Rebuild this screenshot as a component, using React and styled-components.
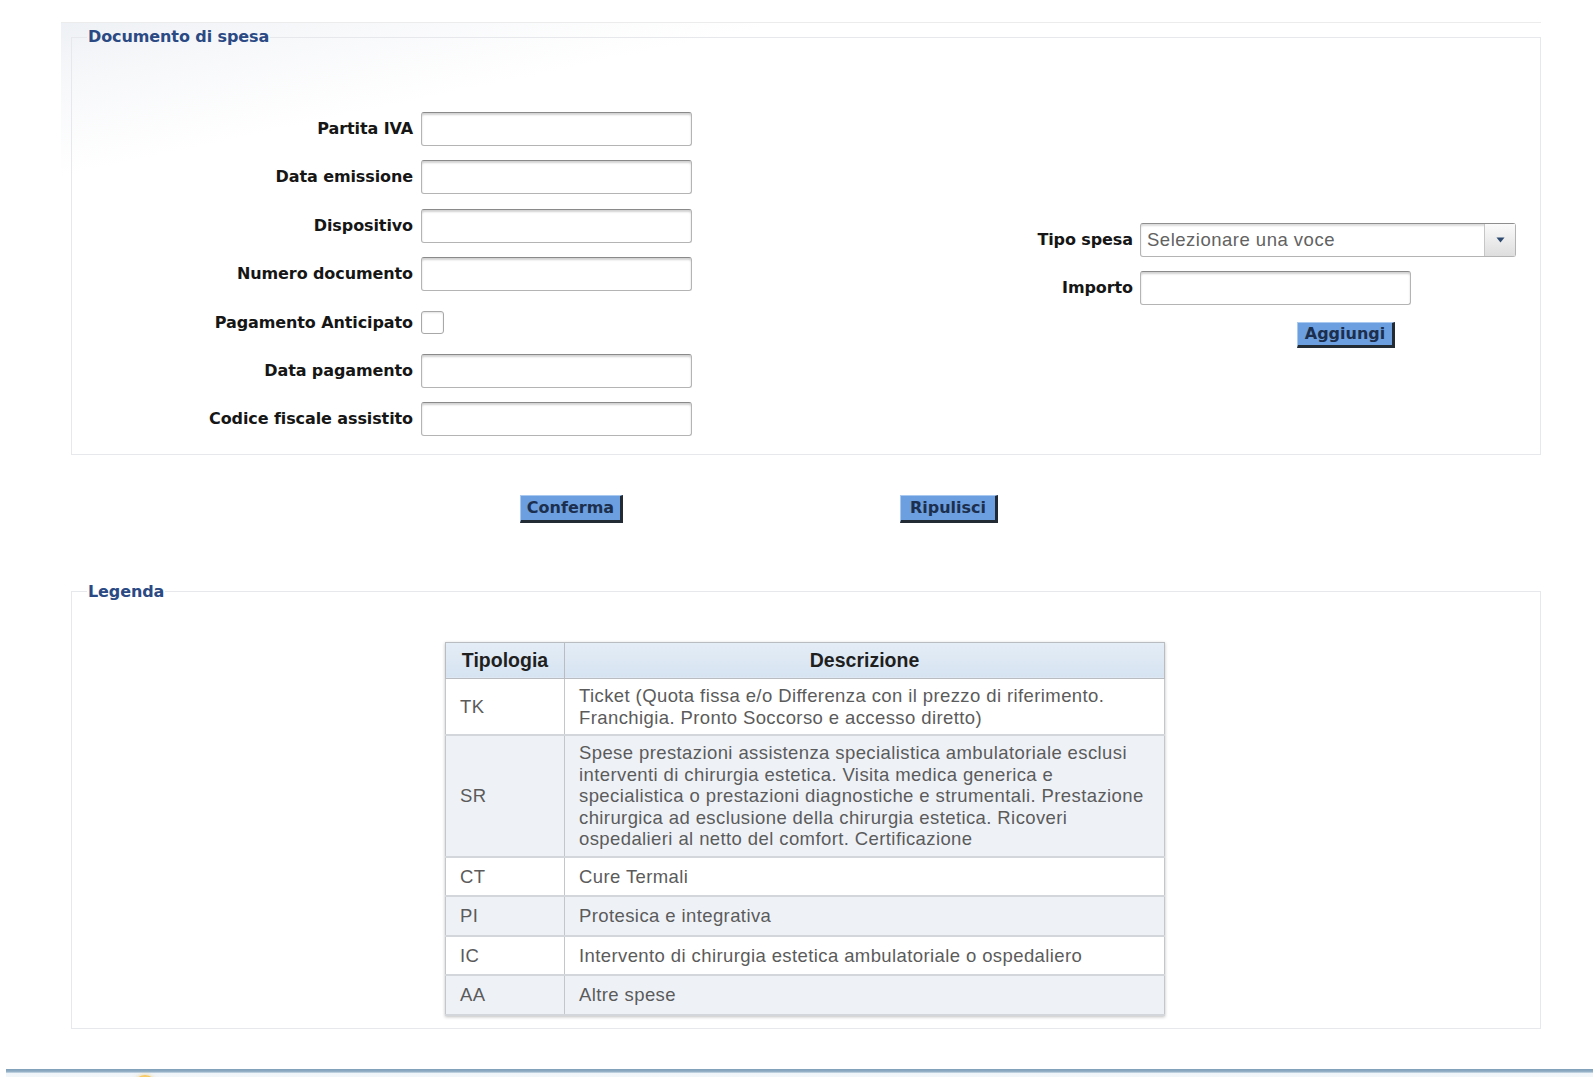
import styled, { createGlobalStyle } from "styled-components";

const GlobalStyle = createGlobalStyle`
  html, body {
    margin: 0;
    padding: 0;
    background: #ffffff;
  }
  body {
    font-family: "DejaVu Sans", Verdana, sans-serif;
    overflow: hidden;
  }
`;

const documentFields = [
  { label: "Partita IVA", type: "text" },
  { label: "Data emissione", type: "text" },
  { label: "Dispositivo", type: "text" },
  { label: "Numero documento", type: "text" },
  { label: "Pagamento Anticipato", type: "check" },
  { label: "Data pagamento", type: "text" },
  { label: "Codice fiscale assistito", type: "text" },
];

const legendRows = [
  {
    code: "TK",
    pad: 6,
    lines: [
      "Ticket (Quota fissa e/o Differenza con il prezzo di riferimento.",
      "Franchigia. Pronto Soccorso e accesso diretto)",
    ],
  },
  {
    code: "SR",
    pad: 6,
    lines: [
      "Spese prestazioni assistenza specialistica ambulatoriale esclusi",
      "interventi di chirurgia estetica. Visita medica generica e",
      "specialistica o prestazioni diagnostiche e strumentali. Prestazione",
      "chirurgica ad esclusione della chirurgia estetica. Ricoveri",
      "ospedalieri al netto del comfort. Certificazione",
    ],
  },
  { code: "CT", pad: 8, lines: ["Cure Termali"] },
  { code: "PI", pad: 8, lines: ["Protesica e integrativa"] },
  { code: "IC", pad: 8, lines: ["Intervento di chirurgia estetica ambulatoriale o ospedaliero"] },
  { code: "AA", pad: 8, lines: ["Altre spese"] },
];

export default function App() {
  return (
    <>
      <GlobalStyle />
      <Page>
        <TopBand>
          <Fieldset>
            <Legend>Documento di spesa</Legend>
            <FormBody>
              <FieldGrid $labelWidth={341} $gap={8} $rowGap={14.4}>
                {documentFields.map((f) => (
                  <Row key={f.label}>
                    <Label>{f.label}</Label>
                    {f.type === "check" ? (
                      <CheckWrap>
                        <CheckBox />
                      </CheckWrap>
                    ) : (
                      <TextInput $width={271} />
                    )}
                  </Row>
                ))}
              </FieldGrid>

              <RightBlock>
                <FieldGrid $gap={7} $rowGap={13.7}>
                  <Row>
                    <Label>Tipo spesa</Label>
                    <Select>
                      <SelectText>Selezionare una voce</SelectText>
                      <SelectArrow>
                        <svg width="9" height="6" viewBox="0 0 9 6">
                          <path d="M0.5 0.5 L8.5 0.5 L4.5 5.5 Z" fill="#2e4a70" />
                        </svg>
                      </SelectArrow>
                    </Select>
                  </Row>
                  <Row>
                    <Label>Importo</Label>
                    <TextInput $width={271} />
                  </Row>
                  <Row>
                    <span />
                    <ActionButton $width={98} $height={25.5} $offset={157} $top={4}>
                      Aggiungi
                    </ActionButton>
                  </Row>
                </FieldGrid>
              </RightBlock>
            </FormBody>
          </Fieldset>
        </TopBand>

        <ButtonRow>
          <ActionButton $width={103}>Conferma</ActionButton>
          <ActionButton $width={98}>Ripulisci</ActionButton>
        </ButtonRow>

        <LegendSection>
          <Fieldset>
            <Legend>Legenda</Legend>
            <TableWrap>
              <Table>
                <thead>
                  <tr>
                    <Th $width={98}>Tipologia</Th>
                    <Th>Descrizione</Th>
                  </tr>
                </thead>
                <tbody>
                  {legendRows.map((r, i) => (
                    <Tr key={r.code} $alt={i % 2 === 1}>
                      <Td $pad={r.pad}>{r.code}</Td>
                      <Td $pad={r.pad}>
                        {r.lines.map((l, j) => (
                          <span key={j}>
                            {l}
                            {j < r.lines.length - 1 && <br />}
                          </span>
                        ))}
                      </Td>
                    </Tr>
                  ))}
                </tbody>
              </Table>
            </TableWrap>
          </Fieldset>
        </LegendSection>

        <Footer>
          <FooterRule />
          <FooterBody>
            <Sun />
          </FooterBody>
        </Footer>
      </Page>
    </>
  );
}

const Page = styled.div`
  width: 1593px;
  height: 1077px;
  overflow: hidden;
`;

const TopBand = styled.section`
  margin: 22px 0 0 61px;
  width: 1470px;
  padding: 5px 0 0 10px;
  border-top: 1px solid #ececec;
  background: linear-gradient(168deg, #eef1f5 0, #f7f8fa 60px, #ffffff 150px);
`;

const LegendSection = styled.section`
  margin: 60px 0 0 71px;
  width: 1470px;
`;

const Fieldset = styled.fieldset`
  margin: 0;
  padding: 0;
  min-width: 0;
  border: 1px solid #e6e8eb;
  background: transparent;
`;

const Legend = styled.legend`
  margin-left: 15px;
  padding: 0 1px;
  font-family: "DejaVu Sans", Verdana, sans-serif;
  font-weight: bold;
  font-size: 16px;
  line-height: 18px;
  letter-spacing: -0.1px;
  color: #2b4a84;
`;

const FormBody = styled.div`
  display: flex;
  align-items: flex-start;
  padding: 66px 24px 18px 0;
`;

const RightBlock = styled.div`
  margin-left: auto;
  margin-top: 111px;
`;

const FieldGrid = styled.div`
  display: grid;
  grid-template-columns: ${(p) => (p.$labelWidth ? `${p.$labelWidth}px` : "auto")} auto;
  column-gap: ${(p) => p.$gap}px;
  row-gap: ${(p) => p.$rowGap}px;
  align-items: center;
`;

const Row = styled.div`
  display: contents;
`;

const Label = styled.label`
  justify-self: end;
  font-family: "DejaVu Sans", Verdana, sans-serif;
  font-weight: bold;
  font-size: 16px;
  line-height: 18px;
  letter-spacing: -0.1px;
  color: #161616;
  white-space: nowrap;
`;

const TextInput = styled.input.attrs({ type: "text" })`
  box-sizing: border-box;
  width: ${(p) => p.$width}px;
  height: 34px;
  margin: 0;
  border: 1px solid #b4b4b4;
  border-top-color: #8a8a8a;
  border-radius: 3px;
  box-shadow: inset 0 2px 2px rgba(0, 0, 0, 0.18);
  background: #fff;
`;

const CheckWrap = styled.div`
  height: 34px;
  display: flex;
  align-items: center;
`;

const CheckBox = styled.span`
  box-sizing: border-box;
  width: 23px;
  height: 23px;
  border: 1px solid #a8a8a8;
  border-radius: 3px;
  background: #fff;
  box-shadow: inset 0 1px 2px rgba(0, 0, 0, 0.12);
`;

const Select = styled.div`
  box-sizing: border-box;
  width: 376px;
  height: 34px;
  display: flex;
  align-items: stretch;
  border: 1px solid #b4b4b4;
  border-top-color: #8e8e8e;
  border-radius: 3px;
  box-shadow: inset 0 2px 2px rgba(0, 0, 0, 0.14);
  background: #fff;
`;

const SelectText = styled.span`
  flex: 1;
  display: flex;
  align-items: center;
  padding-left: 6px;
  font-family: "Liberation Sans", Arial, sans-serif;
  font-size: 18.5px;
  letter-spacing: 0.5px;
  color: #626262;
`;

const SelectArrow = styled.span`
  width: 30px;
  display: flex;
  align-items: center;
  justify-content: center;
  border-left: 1px solid #c6c6c6;
  background: linear-gradient(#fafafa, #dedede);
`;

const ButtonRow = styled.div`
  display: flex;
  gap: 277px;
  margin-top: 40px;
  padding-left: 520px;
`;

const ActionButton = styled.button`
  box-sizing: border-box;
  width: ${(p) => p.$width}px;
  height: ${(p) => p.$height ?? 27.5}px;
  margin: ${(p) => p.$top ?? 0}px 0 0 ${(p) => p.$offset ?? 0}px;
  justify-self: start;
  padding: 0;
  background: #6c9fdf;
  border-style: solid;
  border-width: 1px 3px 3px 1px;
  border-color: #a9c9f1 #222a33 #222a33 #a9c9f1;
  font-family: "DejaVu Sans", Verdana, sans-serif;
  font-weight: bold;
  font-size: 16px;
  color: #1c2f4e;
  line-height: 1;
`;

const TableWrap = styled.div`
  padding: 41px 0 12px 373px;
`;

const Table = styled.table`
  width: 720px;
  border-collapse: collapse;
  border: 1px solid #b9bcc0;
  box-shadow: 0 1px 3px rgba(0, 0, 0, 0.25);
  font-family: "Liberation Sans", Arial, sans-serif;
`;

const Th = styled.th`
  ${(p) => (p.$width ? `width: ${p.$width}px;` : "")}
  padding: 7px 10px;
  font-size: 19.5px;
  line-height: 21.5px;
  font-weight: bold;
  color: #1f1f1f;
  text-align: center;
  background: linear-gradient(#e4edf6, #d6e3f1);
  border: 1px solid #b9bcc0;
`;

const Tr = styled.tr`
  background: ${(p) => (p.$alt ? "#eef2f7" : "#ffffff")};
`;

const Td = styled.td`
  padding: ${(p) => p.$pad}px 14px;
  font-size: 18.5px;
  line-height: 21.5px;
  letter-spacing: 0.4px;
  color: #5b5b5b;
  text-align: left;
  vertical-align: middle;
  border: 1px solid #c3c6ca;
  border-bottom: 2px solid #d3d6da;
  white-space: nowrap;
`;

const Footer = styled.footer`
  margin-top: 40px;
  padding-left: 6px;
`;

const FooterRule = styled.div`
  height: 4px;
  background: linear-gradient(#7f9fb9 0, #8fadc4 60%, #cfdeea 100%);
`;

const FooterBody = styled.div`
  padding: 2px 0 0 128px;
  background: linear-gradient(#f0f5f9, #ffffff);
  height: 30px;
`;

const Sun = styled.div`
  width: 22px;
  height: 22px;
  border-radius: 50%;
  background: radial-gradient(circle at 50% 40%, #fde6a0 0, #f6c558 55%, #eeb443 100%);
  box-shadow: 0 0 4px rgba(240, 190, 80, 0.6);
`;
